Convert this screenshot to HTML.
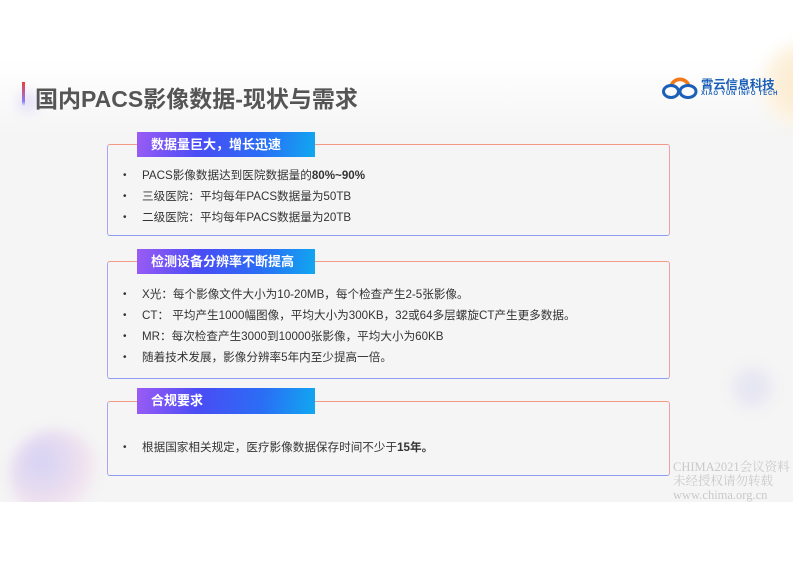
<!DOCTYPE html>
<html><head><meta charset="utf-8"><style>
*{margin:0;padding:0;box-sizing:border-box}
body{width:793px;height:561px;background:#fff;position:relative;overflow:hidden;font-family:"Liberation Sans","Noto Sans CJK SC",sans-serif}
.slide{position:absolute;left:0;top:0;width:793px;height:502px;background:linear-gradient(#fff 0px,#fff 60px,#f5f5f5 135px,#f5f5f5 100%);overflow:hidden}
.bar{position:absolute;left:22px;top:82px;width:3px;height:24px;background:linear-gradient(#f03a3a,#8a7cf0 80%,rgba(200,200,255,0))}
.title{position:absolute;left:35px;top:80px;font-size:23px;font-weight:bold;color:#555}
.box{position:absolute;left:107px;width:563px;border:1px solid;border-color:#f39a86 #ee9cae #8e9cf2 #b0a4f2;border-radius:3px}
.tab{position:absolute;left:137px;width:178px;height:25px;background:linear-gradient(100deg,#9b5cf5 0%,#4a4cf5 35%,#2a6ef5 70%,#10a8f0 100%);color:#fff;font-weight:bold;font-size:13px;line-height:25px;padding-left:14px}
ul{list-style:none;position:absolute;left:124px;font-size:11.6px;color:#333}
li{height:21px;line-height:21px;position:relative;padding-left:18px}
li:before{content:"•";position:absolute;left:-1px;font-size:10px}
.blob{position:absolute;border-radius:50%;filter:blur(6px)}
.wm{position:absolute;left:673px;top:460px;font-family:"Liberation Serif","Noto Serif CJK SC",serif;font-size:12.5px;color:#c9c9c9;line-height:14px}
</style></head><body>
<div class="slide">
<div class="blob" style="left:760px;top:40px;width:90px;height:90px;background:radial-gradient(#fbe9c8,#fdf3e2 60%,rgba(255,255,255,0) 75%)"></div>
<div class="blob" style="left:18px;top:92px;width:20px;height:20px;background:rgba(210,200,245,0.5)"></div>
<div class="blob" style="left:10px;top:430px;width:90px;height:90px;background:radial-gradient(circle at 35% 35%,#d6d2f5,#f0e2ee 55%,rgba(245,245,245,0) 72%)"></div>
<div class="blob" style="left:730px;top:365px;width:45px;height:45px;background:radial-gradient(#e2e6f2,#ebe8f3 55%,rgba(245,245,245,0) 75%)"></div>
<div class="bar"></div>
<div class="title">国内PACS影像数据-现状与需求</div>
<svg style="position:absolute;left:661px;top:72px" width="38" height="30" viewBox="0 0 38 30">
<path d="M10.5 13 A9 8.5 0 0 1 27.5 13" fill="none" stroke="#f07a1a" stroke-width="3.6"/>
<ellipse cx="10" cy="19.5" rx="7.5" ry="6" fill="none" stroke="#1a5fb8" stroke-width="3"/>
<ellipse cx="27" cy="19.5" rx="8" ry="6" fill="none" stroke="#1a5fb8" stroke-width="3"/>
</svg>
<div style="position:absolute;left:701px;top:74px;font-size:12.5px;font-weight:bold;color:#1a5fb8;letter-spacing:-0.3px">霄云信息科技</div>
<div style="position:absolute;left:701px;top:91px;font-size:6px;font-weight:bold;color:#1a5fb8;letter-spacing:0.8px">XIAO YUN INFO TECH</div>

<div class="box" style="top:144px;height:92px"></div>
<div class="tab" style="top:132px">数据量巨大，增长迅速</div>
<ul style="top:165px">
<li>PACS影像数据达到医院数据量的<b>80%~90%</b></li>
<li>三级医院：平均每年PACS数据量为50TB</li>
<li>二级医院：平均每年PACS数据量为20TB</li>
</ul>

<div class="box" style="top:261px;height:118px"></div>
<div class="tab" style="top:249px">检测设备分辨率不断提高</div>
<ul style="top:284px">
<li>X光：每个影像文件大小为10-20MB，每个检查产生2-5张影像。</li>
<li>CT： 平均产生1000幅图像，平均大小为300KB，32或64多层螺旋CT产生更多数据。</li>
<li>MR：每次检查产生3000到10000张影像，平均大小为60KB</li>
<li>随着技术发展，影像分辨率5年内至少提高一倍。</li>
</ul>

<div class="box" style="top:401px;height:75px"></div>
<div class="tab" style="top:388px;height:26px">合规要求</div>
<ul style="top:437px">
<li>根据国家相关规定，医疗影像数据保存时间不少于<b>15年。</b></li>
</ul>
<div class="wm">CHIMA2021会议资料<br>未经授权请勿转载<br>www.chima.org.cn</div>
</div>
</body></html>
